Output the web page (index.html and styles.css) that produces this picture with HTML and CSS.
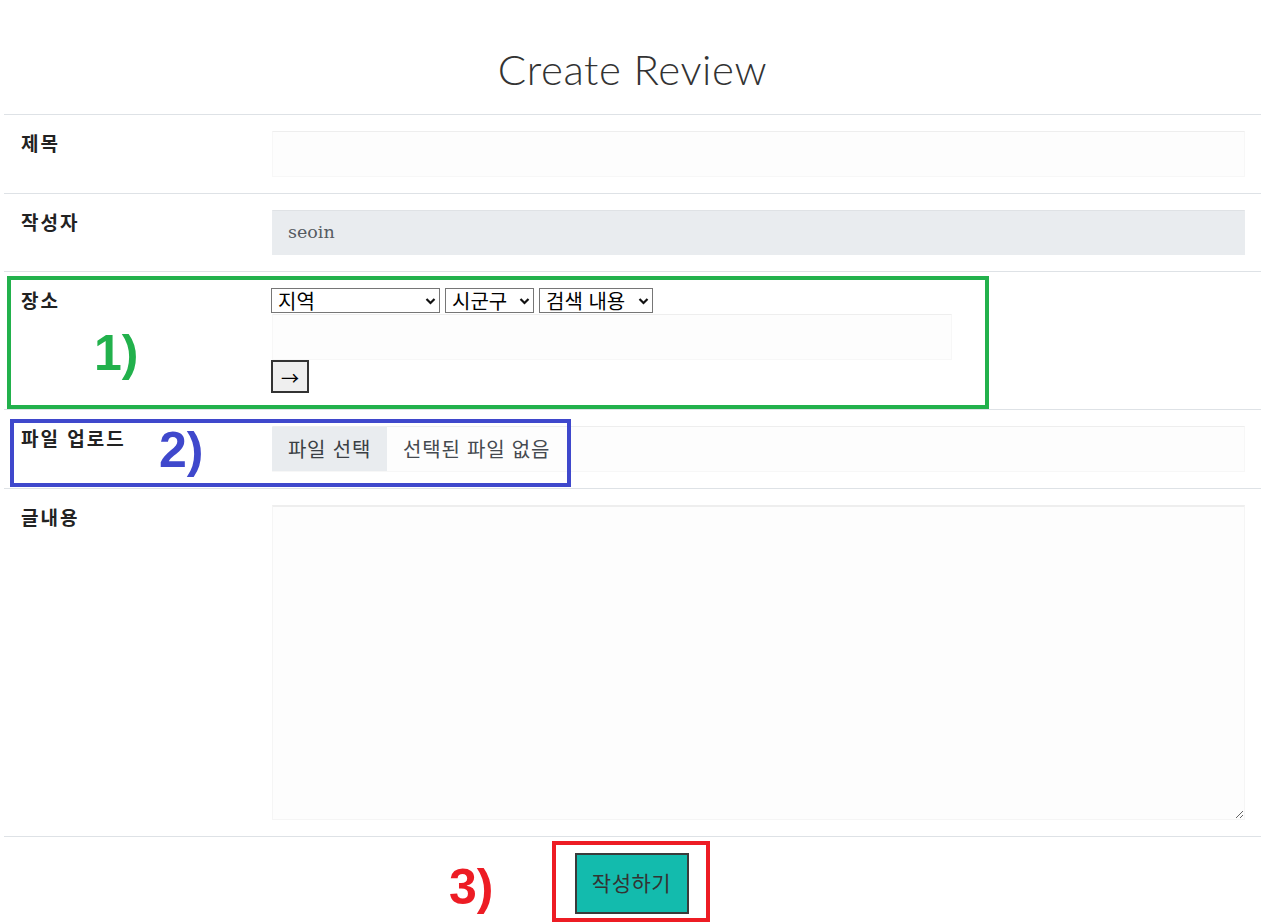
FILE: index.html
```html
<!DOCTYPE html>
<html lang="ko">
<head>
<meta charset="utf-8">
<title>Create Review</title>
<link rel="stylesheet" href="styles.css">
</head>
<body>
<div class="page">
  <h1 class="title">Create Review</h1>
  <div class="form">
    <div class="row">
      <div class="label">제목</div>
      <div class="field"><input class="text-input" type="text"></div>
    </div>
    <div class="row">
      <div class="label">작성자</div>
      <div class="field"><div class="text-input readonly">seoin</div></div>
    </div>
    <div class="row">
      <div class="label">장소</div>
      <div class="field place">
        <div class="selects">
          <select class="sel sel-region"><option>지역</option></select>
          <select class="sel sel-city"><option>시군구</option></select>
          <select class="sel sel-search"><option>검색 내용</option></select>
        </div>
        <input class="text-input place-input" type="text">
        <button class="arrow-btn" type="button">→</button>
      </div>
    </div>
    <div class="row">
      <div class="label">파일 업로드</div>
      <div class="field">
        <div class="file-input">
          <span class="file-btn">파일 선택</span>
          <span class="file-name">선택된 파일 없음</span>
        </div>
      </div>
    </div>
    <div class="row">
      <div class="label">글내용</div>
      <div class="field"><textarea class="textarea"></textarea></div>
    </div>
    <div class="row submit-row">
      <button class="submit-btn" type="submit">작성하기</button>
    </div>
  </div>

  <div class="mark mark-green"></div>
  <div class="mark mark-blue"></div>
  <div class="mark mark-red"></div>
  <span class="num num-1">1)</span>
  <span class="num num-2">2)</span>
  <span class="num num-3">3)</span>
</div>
</body>
</html>
```

FILE: styles.css
```css
* { box-sizing: border-box; }
html, body { margin: 0; padding: 0; background: #fff; }
body {
  font-family: "Noto Sans CJK KR", "Noto Sans", sans-serif;
  color: #212529;
}
.page {
  position: relative;
  width: 1275px;
  height: 922px;
  overflow: hidden;
  padding: 0 14px 0 4px;
}
.title {
  margin: 0;
  height: 114px;
  display: flex;
  align-items: center;
  justify-content: center;
  padding-top: 24px;
  font-family: "Lato", "Open Sans", sans-serif;
  font-weight: 300;
  font-size: 42px;
  letter-spacing: 0.6px;
  color: #333;
}
.form { width: 1257px; }
.row {
  display: grid;
  grid-template-columns: 252px 1fr;
  border-top: 1px solid #dee2e6;
  padding: 16px 16px 16px 0;
}
.label {
  padding-left: 17px;
  font-size: 19px;
  font-weight: 700;
  letter-spacing: 2px;
  line-height: 24px;
  color: #222;
}
.field { display: flex; flex-direction: column; padding-left: 16px; }
.text-input {
  display: block;
  width: 100%;
  height: 46px;
  margin: 0;
  border: 1px solid #f7f7f7;
  border-top-color: #eeeeee;
  background: #fdfdfd;
  padding: 0 15px;
  font-size: 16px;
  outline: none;
}
.readonly {
  height: 45px;
  background: #e9ecef;
  border-color: #e9ecef;
  border-top-color: #dfe2e5;
  display: flex;
  align-items: center;
  font-family: "DejaVu Serif", serif;
  font-size: 17.5px;
  color: #555b61;
  padding-bottom: 2px;
}
.place { align-items: flex-start; }
.selects { display: flex; gap: 5px; height: 25px; margin-left: -1px; }
.sel {
  -webkit-appearance: none;
  appearance: none;
  height: 25px;
  font-family: "Noto Sans CJK KR", sans-serif;
  font-size: 20px;
  color: #000;
  background-color: #fff;
  background-image: url("data:image/svg+xml,%3Csvg xmlns='http://www.w3.org/2000/svg' width='11' height='8' viewBox='0 0 11 8'%3E%3Cpath d='M1.5 2 L5.5 6 L9.5 2' fill='none' stroke='%23111' stroke-width='2.2'/%3E%3C/svg%3E");
  background-repeat: no-repeat;
  background-position: right 3px center;
  border: 1px solid #767676;
  border-radius: 0;
  padding: 0 14px 0 6px;
  margin: 0;
  line-height: 22px;
}
.sel-region { width: 169px; }
.sel-city { width: 89px; }
.sel-search { width: 114px; }
.place-input { width: 680px; margin-top: 1px; height: 46px; }
.arrow-btn {
  margin: 0 0 0 -1px;
  width: 38px;
  height: 33px;
  border: 2px solid #333;
  background: #efefef;
  font-family: "Noto Sans CJK KR", sans-serif;
  font-size: 18px;
  line-height: 1;
  color: #000;
  padding: 0;
}
.file-input {
  display: flex;
  align-items: center;
  height: 46px;
  border: 1px solid #f7f7f7;
  border-top-color: #eee;
  background: #fdfdfd;
  font-size: 20px;
  letter-spacing: 0.8px;
  color: #454a50;
}
.file-btn {
  height: 100%;
  width: 115px;
  margin-top: -1px;
  margin-bottom: -1px;
  margin-left: -1px;
  display: flex;
  align-items: center;
  justify-content: center;
  padding-bottom: 2px;
  background: #e9ecef;
  color: #3a3f44;
}
.file-name { margin-left: 16px; margin-top: -2px; }
.textarea {
  display: block;
  width: 100%;
  height: 315px;
  border: 1px solid #f5f5f5;
  border-top: 2px solid #eeeeee;
  background: #fdfdfd;
  resize: vertical;
  margin: 0;
  outline: none;
}
.submit-row {
  display: flex;
  justify-content: center;
  padding: 16px 0 0 0;
}
.submit-btn {
  width: 114px;
  height: 61px;
  background: #13bbad;
  border: 2px solid #3a3a3a;
  font-family: "Noto Sans CJK KR", sans-serif;
  font-size: 21px;
  letter-spacing: 0.5px;
  color: #333;
  padding: 0 0 4px 0;
  margin-left: -2px;
}
.mark { position: absolute; border: 4px solid; pointer-events: none; }
.mark-green { left: 7px; top: 276px; width: 982px; height: 133px; border-color: #22b14c; }
.mark-blue { left: 10px; top: 419px; width: 561px; height: 68px; border-color: #3f48cc; }
.mark-red { left: 552px; top: 841px; width: 158px; height: 81px; border-color: #ed1c24; }
.num {
  position: absolute;
  font-family: "Liberation Sans", Arial, sans-serif;
  font-weight: 700;
  font-size: 50px;
  line-height: 1;
}
.num-1 { left: 94px; top: 328px; color: #22b14c; }
.num-2 { left: 159px; top: 425px; color: #3f48cc; }
.num-3 { left: 449px; top: 862px; color: #ed1c24; }
```
